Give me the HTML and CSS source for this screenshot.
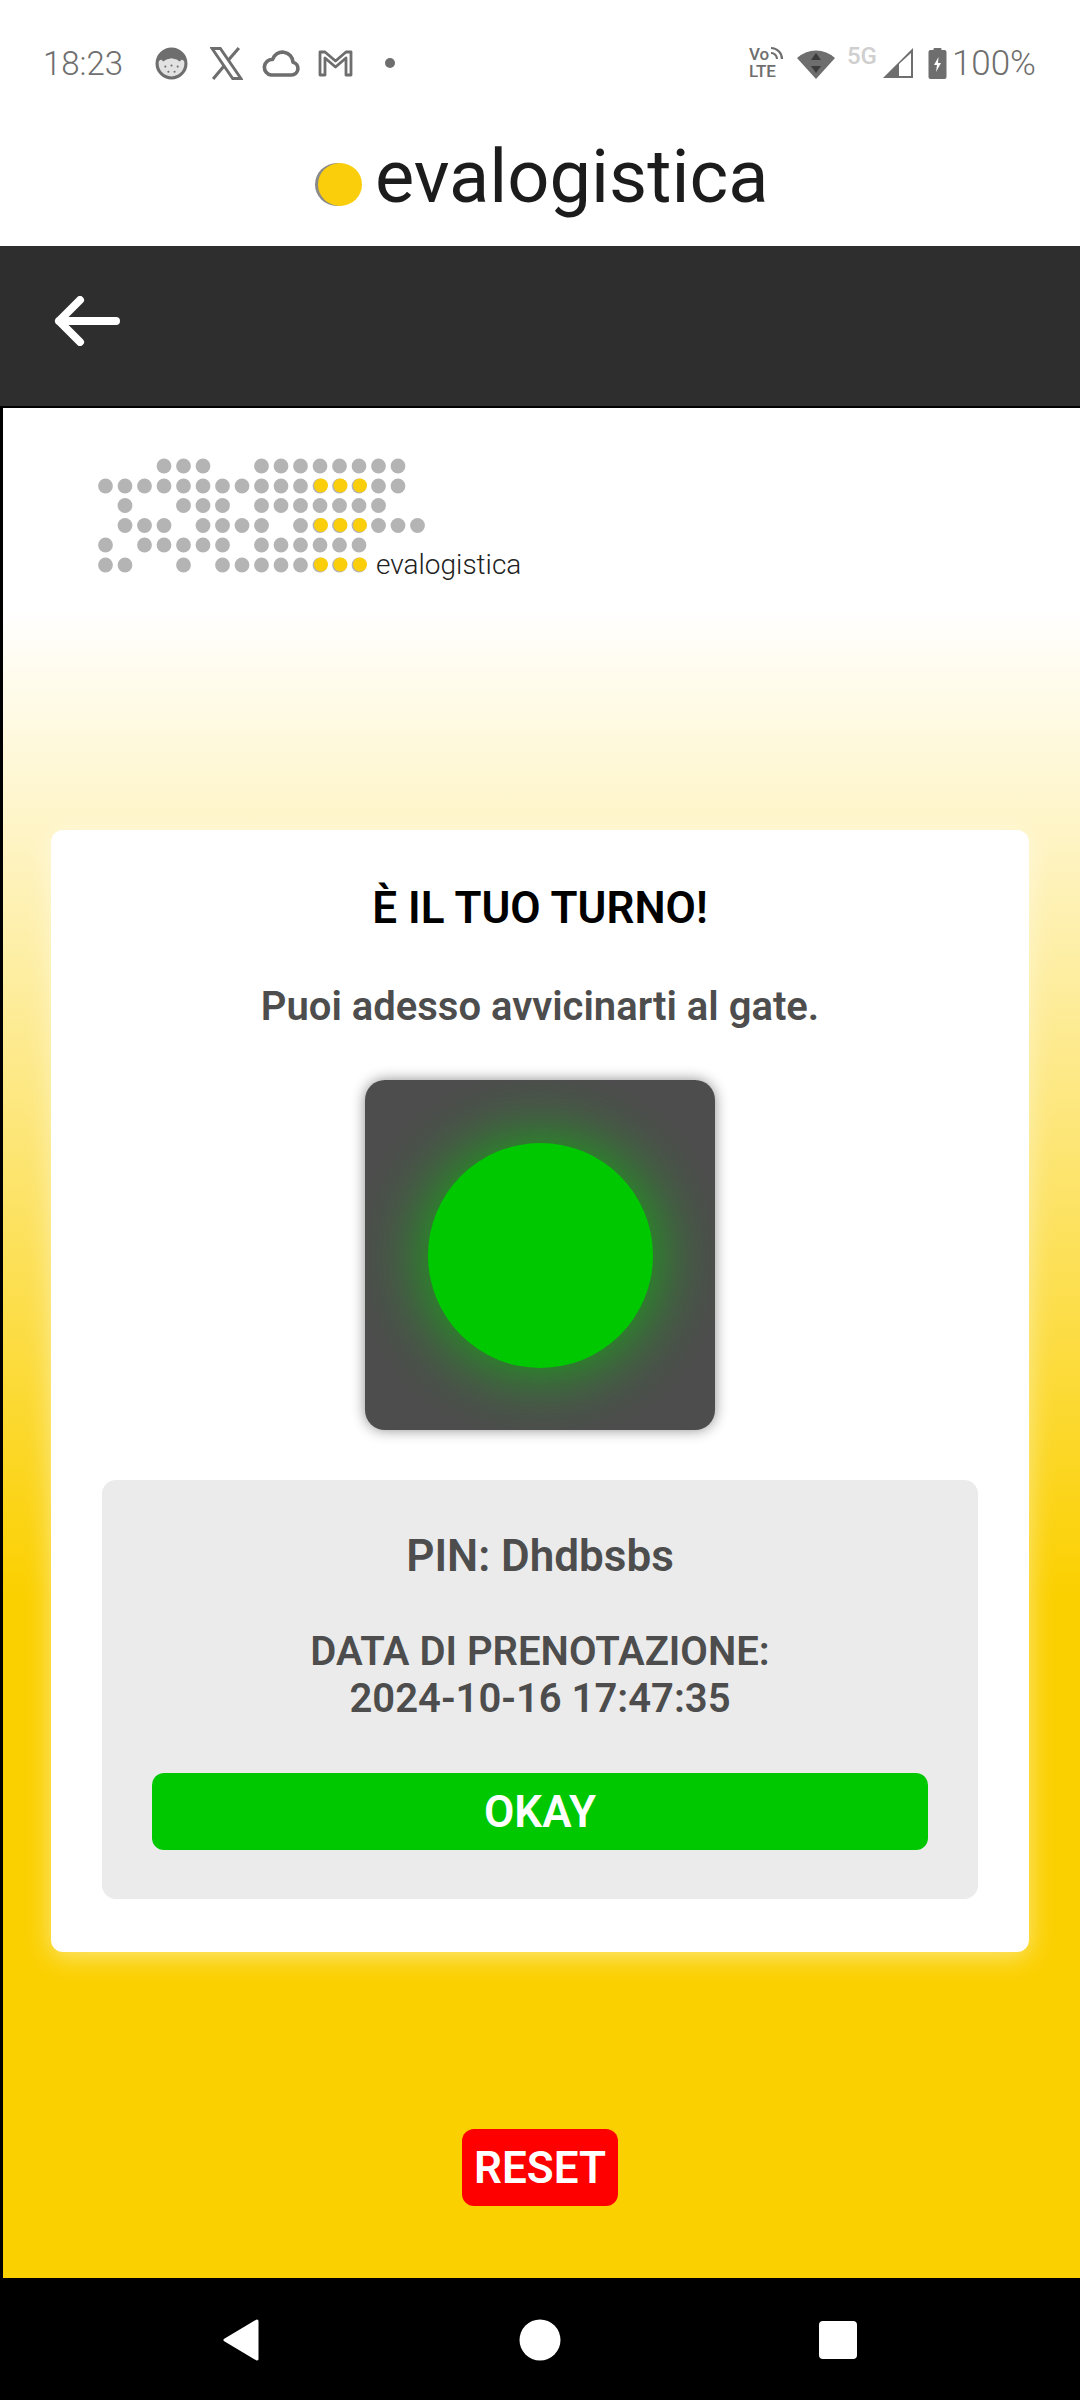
FILE: index.html
```html
<!DOCTYPE html>
<html lang="it">
<head>
    <meta charset="UTF-8">
    <meta name="viewport" content="width=device-width, initial-scale=1.0">
    <title>evalogistica</title>
    <link rel="stylesheet" href="styles.css">
</head>
<body>
    <!-- Android status bar -->
    <div class="status-bar">
        <div class="status-left">
            <span class="status-time">18:23</span>
            <svg class="icon-face" viewBox="0 0 32 32" width="33" height="33">
                <circle cx="16" cy="16" r="14" fill="#e2e2e2" stroke="#6e6e6e" stroke-width="3"/>
                <path d="M3 14 A13 13 0 0 1 29 14 L26 12 L24 14 L21 12 L16 11 L11 12 L8 14 L6 12 Z" fill="#6e6e6e"/>
                <circle cx="10" cy="19" r="1" fill="#6e6e6e"/>
                <circle cx="16" cy="18" r="1" fill="#6e6e6e"/>
                <circle cx="22" cy="19" r="1" fill="#6e6e6e"/>
                <circle cx="13" cy="24" r="1" fill="#6e6e6e"/>
                <circle cx="19" cy="24" r="1" fill="#6e6e6e"/>
            </svg>
            <svg class="icon-x" viewBox="0 0 32 32" width="33" height="33">
                <path d="M2 1.5 H10 L30 30.5 H22 Z" fill="none" stroke="#6e6e6e" stroke-width="2.8"/>
                <path d="M28 1 L17.5 13 M14 18 L3 31" fill="none" stroke="#6e6e6e" stroke-width="3"/>
            </svg>
            <svg class="icon-cloud" viewBox="0 0 38 27" width="38" height="27">
                <path d="M9 25 H29.5 A6.5 6.5 0 0 0 31 12.2 A10.5 10.5 0 0 0 10.5 9.5 A7.8 7.8 0 0 0 9 25 Z" fill="none" stroke="#6e6e6e" stroke-width="3.6" stroke-linejoin="round"/>
            </svg>
            <svg class="icon-mail" viewBox="0 0 35 28" width="35" height="28">
                <path d="M2 26 V3 H7 L17.5 12 L28 3 H33 V26 H28 V9 L17.5 18 L7 9 V26 Z" fill="none" stroke="#6e6e6e" stroke-width="2.8" stroke-linejoin="round"/>
            </svg>
            <span class="status-dot"></span>
        </div>
        <div class="status-right">
            <span class="volte"><span class="volte-top">Vo<svg viewBox="0 0 14 14" width="14" height="14"><path d="M1 2 A11 11 0 0 1 12 13 M1 7 A6 6 0 0 1 7 13" fill="none" stroke="#6e6e6e" stroke-width="2.2"/></svg></span><span>LTE</span></span>
            <svg class="icon-wifi" viewBox="0 0 38 32" width="38" height="32">
                <path d="M0 11 A28 28 0 0 1 38 11 L19 32 Z" fill="#6e6e6e"/>
                <path d="M19 6 L24 13 H14 Z M14 19 H24 L19 26 Z" fill="#3c3c3c"/>
            </svg>
            <span class="five-g">5G</span>
            <svg class="icon-signal" viewBox="0 0 32 32" width="32" height="32">
                <path d="M1 31 L31 1 V31 Z M17 29 H29 V6 L17 17 Z" fill="#6e6e6e" fill-rule="evenodd"/>
            </svg>
            <svg class="icon-battery" viewBox="0 0 18 32" width="19" height="32">
                <path d="M5 2 A1 1 0 0 1 6 1 H12 A1 1 0 0 1 13 2 V3 H16 A2 2 0 0 1 18 5 V30 A2 2 0 0 1 16 32 H2 A2 2 0 0 1 0 30 V5 A2 2 0 0 1 2 3 H5 Z" fill="#6e6e6e"/>
                <path d="M10 10 L5.5 18 H8.5 L7.5 25 L12.5 16 H9.5 Z" fill="#fff"/>
            </svg>
            <span class="status-battery">100%</span>
        </div>
    </div>

    <!-- Brand bar -->
    <div class="brand-bar">
        <span class="brand-dot"></span>
        <span class="brand-name">evalogistica</span>
    </div>

    <div class="toolbar">
        <svg viewBox="0 0 66 50" width="66" height="50">
            <path d="M62 25 H5 M26 4 L5 25 L26 46" fill="none" stroke="#fff" stroke-width="8" stroke-linecap="round" stroke-linejoin="round"/>
        </svg>
    </div>

    <div class="content">
        <svg class="dots-logo" viewBox="0 0 430 124" width="430" height="124">
            <g fill="#b4b4b4">
                <circle cx="66" cy="8" r="7.4"/><circle cx="85.5" cy="8" r="7.4"/><circle cx="105" cy="8" r="7.4"/>
                <circle cx="163.5" cy="8" r="7.4"/><circle cx="183" cy="8" r="7.4"/><circle cx="202.5" cy="8" r="7.4"/><circle cx="222" cy="8" r="7.4"/><circle cx="241.5" cy="8" r="7.4"/><circle cx="261" cy="8" r="7.4"/><circle cx="280.5" cy="8" r="7.4"/><circle cx="300" cy="8" r="7.4"/>

                <circle cx="7.5" cy="28" r="7.4"/><circle cx="27" cy="28" r="7.4"/><circle cx="46.5" cy="28" r="7.4"/><circle cx="66" cy="28" r="7.4"/><circle cx="85.5" cy="28" r="7.4"/><circle cx="105" cy="28" r="7.4"/><circle cx="124.5" cy="28" r="7.4"/><circle cx="144" cy="28" r="7.4"/><circle cx="163.5" cy="28" r="7.4"/><circle cx="183" cy="28" r="7.4"/><circle cx="202.5" cy="28" r="7.4"/><circle cx="222" cy="28" r="7.4"/><circle cx="241.5" cy="28" r="7.4"/><circle cx="261" cy="28" r="7.4"/><circle cx="280.5" cy="28" r="7.4"/><circle cx="300" cy="28" r="7.4"/>

                <circle cx="27" cy="47.5" r="7.4"/><circle cx="85.5" cy="47.5" r="7.4"/><circle cx="105" cy="47.5" r="7.4"/><circle cx="124.5" cy="47.5" r="7.4"/><circle cx="163.5" cy="47.5" r="7.4"/><circle cx="183" cy="47.5" r="7.4"/><circle cx="202.5" cy="47.5" r="7.4"/><circle cx="222" cy="47.5" r="7.4"/><circle cx="241.5" cy="47.5" r="7.4"/><circle cx="261" cy="47.5" r="7.4"/><circle cx="280.5" cy="47.5" r="7.4"/>

                <circle cx="27" cy="67.5" r="7.4"/><circle cx="46.5" cy="67.5" r="7.4"/><circle cx="66" cy="67.5" r="7.4"/><circle cx="105" cy="67.5" r="7.4"/><circle cx="124.5" cy="67.5" r="7.4"/><circle cx="144" cy="67.5" r="7.4"/><circle cx="163.5" cy="67.5" r="7.4"/><circle cx="202.5" cy="67.5" r="7.4"/><circle cx="222" cy="67.5" r="7.4"/><circle cx="241.5" cy="67.5" r="7.4"/><circle cx="261" cy="67.5" r="7.4"/><circle cx="280.5" cy="67.5" r="7.4"/><circle cx="300" cy="67.5" r="7.4"/><circle cx="319.5" cy="67.5" r="7.4"/>

                <circle cx="7.5" cy="87" r="7.4"/><circle cx="46.5" cy="87" r="7.4"/><circle cx="66" cy="87" r="7.4"/><circle cx="85.5" cy="87" r="7.4"/><circle cx="105" cy="87" r="7.4"/><circle cx="124.5" cy="87" r="7.4"/><circle cx="163.5" cy="87" r="7.4"/><circle cx="183" cy="87" r="7.4"/><circle cx="202.5" cy="87" r="7.4"/><circle cx="222" cy="87" r="7.4"/><circle cx="241.5" cy="87" r="7.4"/><circle cx="261" cy="87" r="7.4"/>

                <circle cx="7.5" cy="107" r="7.4"/><circle cx="27" cy="107" r="7.4"/><circle cx="85.5" cy="107" r="7.4"/><circle cx="124.5" cy="107" r="7.4"/><circle cx="144" cy="107" r="7.4"/><circle cx="163.5" cy="107" r="7.4"/><circle cx="183" cy="107" r="7.4"/><circle cx="202.5" cy="107" r="7.4"/><circle cx="222" cy="107" r="7.4"/><circle cx="241.5" cy="107" r="7.4"/><circle cx="261" cy="107" r="7.4"/>
            </g>
            <!-- yellow sits a little off the grey dot, leaving a crescent -->
            <g fill="#fbce0c">
                <circle cx="223" cy="27.5" r="7"/><circle cx="242.5" cy="27.5" r="7"/><circle cx="262" cy="27.5" r="7"/>
                <circle cx="223" cy="67" r="7"/><circle cx="242.5" cy="67" r="7"/><circle cx="262" cy="67" r="7"/>
                <circle cx="223" cy="106.5" r="7"/><circle cx="242.5" cy="106.5" r="7"/><circle cx="262" cy="106.5" r="7"/>
            </g>
            <text class="dots-logo-text" x="278" y="116">evalogistica</text>
        </svg>

        <div class="card">
            <h1 class="card-title">È IL TUO TURNO!</h1>
            <p class="card-subtitle">Puoi adesso avvicinarti al gate.</p>
            <div class="light-box">
                <div class="light-green"></div>
            </div>
            <div class="info-panel">
                <p class="info-pin">PIN: Dhdbsbs</p>
                <p class="info-date">DATA DI PRENOTAZIONE:<br>2024-10-16 17:47:35</p>
                <button class="btn-okay" type="button">OKAY</button>
            </div>
        </div>

        <button class="btn-reset" type="button">RESET</button>
    </div>

    <!-- Android navigation bar -->
    <div class="nav-bar">
        <svg viewBox="0 0 38 42" width="38" height="42"><path d="M35 2 L3 21 L35 40 Z" fill="#fff" stroke="#fff" stroke-width="3" stroke-linejoin="round"/></svg>
        <svg viewBox="0 0 42 42" width="42" height="42"><circle cx="21" cy="21" r="20.5" fill="#fff"/></svg>
        <svg class="nav-square" viewBox="0 0 38 38" width="38" height="38"><rect width="38" height="38" rx="4" fill="#fff"/></svg>
    </div>
</body>
</html>
```

FILE: styles.css
```css
* {
    box-sizing: border-box;
}
body {
    margin: 0;
    width: 1080px;
    height: 2400px;
    display: flex;
    flex-direction: column;
    font-family: Roboto, Arial, sans-serif;
    background-color: #fff;
    overflow: hidden;
}
h1, p {
    margin: 0;
}

/* status bar */
.status-bar {
    height: 120px;
    padding: 46px 44px 0 43px;
    display: flex;
    justify-content: space-between;
    align-items: flex-start;
    color: #6e6e6e;
}
.status-left, .status-right {
    display: flex;
    align-items: center;
    height: 34px;
}
.status-time {
    width: 112px;
    font-size: 33px;
    font-weight: 300;
}
.icon-face {
    margin-right: 22px;
}
.icon-x {
    margin-right: 19px;
}
.icon-cloud {
    margin-right: 18px;
}
.status-dot {
    width: 10px;
    height: 10px;
    margin-left: 32px;
    border-radius: 50%;
    background-color: #6e6e6e;
}
.volte {
    width: 48px;
    display: flex;
    flex-direction: column;
    font-size: 17px;
    font-weight: 500;
    line-height: 17px;
}
.volte-top svg {
    margin-left: 1px;
}
.five-g {
    width: 35px;
    margin-left: 12px;
    margin-top: -14px;
    font-size: 24px;
    font-weight: 500;
    color: #cfcfcf;
}
.icon-battery {
    margin-left: 14px;
    margin-right: 5px;
}
.status-battery {
    font-size: 35px;
    font-weight: 300;
}

/* brand */
.brand-bar {
    height: 126px;
    display: flex;
    align-items: flex-start;
    padding-left: 318px;
}
.brand-dot {
    width: 44px;
    height: 43px;
    margin-top: 43px;
    border-radius: 50%;
    background-color: #fbce0c;
    box-shadow: -3px 0 0 #8a8a8a;
}
.brand-name {
    margin-left: 13px;
    margin-top: 15px;
    font-size: 74px;
    font-weight: 400;
    line-height: 84px;
    color: #1c1c1c;
}

.toolbar {
    height: 162px;
    padding: 50px 0 0 54px;
    background-color: #2e2e2e;
    border-bottom: 2px solid #000;
}

/* page content */
.content {
    flex: 1;
    display: flex;
    flex-direction: column;
    border-left: 3px solid #000;
    background: linear-gradient(to bottom, #fff 200px, #fbd000 1190px);
}
.dots-logo {
    margin: 50px 0 0 95px;
    flex-shrink: 0;
}
.dots-logo-text {
    font-family: Roboto, Arial, sans-serif;
    font-size: 28px;
    font-weight: 300;
    fill: #222;
}
.card {
    width: 978px;
    height: 1122px;
    margin: 248px 0 0 48px;
    padding: 52px 50px 0;
    display: flex;
    flex-direction: column;
    align-items: center;
    background-color: #fff;
    border-radius: 12px;
    box-shadow: 0 4px 26px rgba(255, 255, 255, 0.5);
}
.card-title {
    font-size: 44px;
    font-weight: 600;
    color: #000;
}
.card-subtitle {
    margin-top: 49px;
    font-size: 40px;
    font-weight: 600;
    color: #4d4d4d;
}
.light-box {
    width: 350px;
    height: 350px;
    margin-top: 50px;
    display: flex;
    align-items: center;
    justify-content: center;
    overflow: hidden;
    background-color: #4d4d4d;
    border-radius: 20px;
    box-shadow: 0 0 14px rgba(0, 0, 0, 0.45);
}
.light-green {
    width: 225px;
    height: 225px;
    border-radius: 50%;
    background-color: #00c800;
    box-shadow: 0 0 70px rgba(0, 200, 0, 0.85);
}
.info-panel {
    width: 876px;
    height: 419px;
    margin-top: 50px;
    padding: 50px 50px 0;
    text-align: center;
    background-color: #ebebeb;
    border-radius: 14px;
    color: #4d4d4d;
    font-weight: 600;
}
.info-pin {
    font-size: 44px;
}
.info-date {
    margin-top: 46px;
    font-size: 40px;
}
.btn-okay {
    width: 776px;
    height: 77px;
    margin-top: 51px;
    border: none;
    border-radius: 12px;
    background-color: #00c800;
    color: #fff;
    font-family: inherit;
    font-size: 44px;
    font-weight: 600;
}
.btn-reset {
    align-self: center;
    margin: 177px 3px 0 0;
    width: 156px;
    height: 77px;
    padding: 0;
    border: none;
    border-radius: 12px;
    background-color: #f00;
    color: #fff;
    font-family: inherit;
    font-size: 44px;
    font-weight: 600;
}

/* nav bar */
.nav-bar {
    height: 122px;
    padding: 41px 223px 0 222px;
    display: flex;
    justify-content: space-between;
    align-items: flex-start;
    background-color: #000;
}
.nav-square {
    margin-top: 2px;
}
```
